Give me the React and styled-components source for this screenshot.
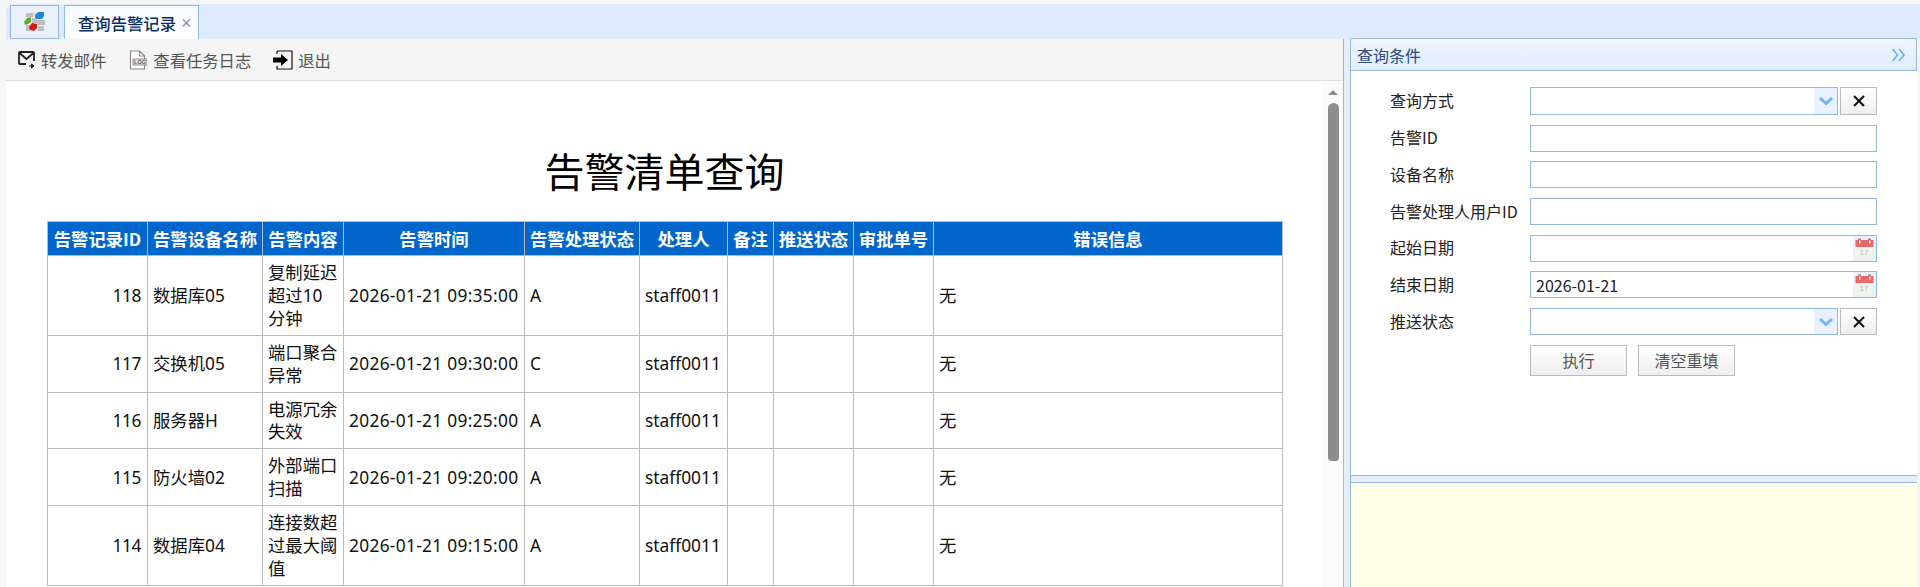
import React from "react";
import styled, { createGlobalStyle } from "styled-components";

const GlobalStyle = createGlobalStyle`
  html, body {
    margin: 0;
    padding: 0;
    background: #f6f6f6;
  }
  body {
    font-family: "Noto Sans CJK SC", "Liberation Sans", sans-serif;
  }
`;

const Frame = styled.div`
  width: 1920px;
  height: 587px;
  overflow: hidden;
  box-sizing: border-box;
  padding: 4px 0 0 6px;
  display: flex;
  flex-direction: column;
  background: #f6f6f6;
`;

const TabBar = styled.div`
  height: 35px;
  flex: none;
  box-sizing: border-box;
  padding: 1px 0 0 4px;
  display: flex;
  gap: 5px;
  background: #deeaff;
  border-top-left-radius: 8px;
`;

const Tab = styled.div`
  box-sizing: border-box;
  height: 34px;
  border: 1px solid #95b8e7;
  border-bottom: ${(p) => (p.$active ? "none" : "1px solid #95b8e7")};
  background: ${(p) => (p.$active ? "linear-gradient(#f6f9ff, #fff)" : "#e9f1ff")};
  display: flex;
  align-items: center;
  justify-content: ${(p) => (p.$active ? "flex-start" : "center")};
  width: ${(p) => (p.$active ? "135px" : "49px")};
  padding-left: ${(p) => (p.$active ? "13px" : "0")};
`;

const TabTitle = styled.span`
  font-size: 16.33px;
  font-weight: 500;
  color: #0e2d5f;
  white-space: nowrap;
`;

const TabClose = styled.span`
  margin-left: 5px;
  font-size: 18px;
  line-height: 18px;
  color: #7f93b5;
  font-family: "Liberation Sans", sans-serif;
`;

const Workspace = styled.div`
  flex: 1;
  min-height: 0;
  display: flex;
`;

const MainColumn = styled.div`
  width: 1337px;
  flex: none;
  display: flex;
  flex-direction: column;
  background: #fff;
`;

const Toolbar = styled.div`
  height: 42px;
  flex: none;
  box-sizing: border-box;
  padding-left: 12px;
  display: flex;
  align-items: center;
  gap: 22px;
  background: #f5f5f5;
  border-bottom: 1px solid #dedede;
`;

const ToolItem = styled.div`
  display: flex;
  align-items: center;
  gap: ${(p) => p.$gap || 6}px;
  font-size: 16.33px;
  color: #555;
`;

const ContentRow = styled.div`
  flex: 1;
  min-height: 0;
  display: flex;
`;

const ReportPane = styled.div`
  width: 1317px;
  flex: none;
  box-sizing: border-box;
  padding: 65px 0 0 41px;
  overflow: hidden;
`;

const ReportBody = styled.div`
  width: 1235px;
`;

const ReportTitle = styled.h1`
  margin: 0 0 27px;
  height: 48px;
  font-size: 40px;
  line-height: 48px;
  font-weight: 400;
  text-align: center;
  color: #000;
`;

const AlarmTable = styled.table`
  width: 1235px;
  table-layout: fixed;
  border-collapse: collapse;
  font-family: "Noto Sans", "Noto Sans CJK SC", sans-serif;
  font-size: 17.33px;
  color: #111;
`;

const HeadCell = styled.th`
  height: 33px;
  padding: 0;
  border: 1px solid #bbb;
  background: #0066cc;
  color: #fff;
  font-family: "Noto Sans CJK SC", sans-serif;
  font-size: 17.33px;
  font-weight: 700;
  text-align: center;
  white-space: nowrap;
`;

const Cell = styled.td`
  padding: 5px ${(p) => (p.$wrap ? 4 : 6)}px 5px 5px;
  border: 1px solid #bbb;
  line-height: 22.9px;
  text-align: ${(p) => (p.$right ? "right" : "left")};
  white-space: ${(p) => (p.$wrap ? "normal" : "nowrap")};
  letter-spacing: ${(p) => p.$spacing || "normal"};
`;

const ScrollTrack = styled.div`
  width: 20px;
  flex: none;
  box-sizing: border-box;
  padding-top: 9px;
  display: flex;
  flex-direction: column;
  align-items: center;
  background: #fbfbfb;
`;

const ScrollArrow = styled.div`
  width: 0;
  height: 0;
  border-left: 5px solid transparent;
  border-right: 5px solid transparent;
  border-bottom: 5px solid #8d8d8d;
`;

const ScrollThumb = styled.div`
  width: 11px;
  height: 358px;
  margin-top: 8px;
  background: #8d8d8d;
  border-radius: 6px 6px 4px 4px;
`;

const VSplitter = styled.div`
  width: 8px;
  flex: none;
  box-sizing: border-box;
  background: #e6eef8;
  border-left: 1px solid #95b8e7;
  border-right: 1px solid #95b8e7;
`;

const SidePanel = styled.div`
  width: 566px;
  flex: none;
  display: flex;
  flex-direction: column;
  background: #fff;
`;

const SideHeader = styled.div`
  height: 33px;
  flex: none;
  margin-top: -1px;
  box-sizing: border-box;
  padding: 0 10px 0 6px;
  display: flex;
  align-items: center;
  justify-content: space-between;
  background: linear-gradient(#eff5ff, #e0ecff);
  border: 1px solid #95b8e7;
  border-left: none;
  font-size: 16px;
  color: #2b4a7d;
`;

const QueryForm = styled.form`
  height: 404px;
  flex: none;
  box-sizing: border-box;
  margin: 0;
  padding: 16px 0 0 39px;
  display: grid;
  grid-template-columns: 140px 347px;
  grid-auto-rows: min-content;
  row-gap: 9.7px;
  font-size: 16px;
  color: #222;
`;

const FieldLabel = styled.label`
  display: flex;
  align-items: center;
  padding-bottom: 2px;
  white-space: nowrap;
`;

const ComboRow = styled.div`
  display: flex;
  gap: 2px;
`;

const FieldBox = styled.div`
  flex: 1;
  height: ${(p) => p.$height || 27}px;
  box-sizing: border-box;
  display: flex;
  border: 1px solid #95b8e7;
  background: #fff;
`;

const FieldInput = styled.input`
  flex: 1;
  min-width: 0;
  padding: 0 5px;
  border: none;
  outline: none;
  background: transparent;
  font-family: "Noto Sans CJK SC", sans-serif;
  font-size: 16px;
  color: #222;
`;

const FieldAddon = styled.span`
  width: 23px;
  flex: none;
  display: flex;
  align-items: center;
  justify-content: center;
  background: #e8f1ff;
`;

const ClearButton = styled.button`
  width: 37px;
  height: ${(p) => p.$height || 27}px;
  flex: none;
  padding: 0;
  display: flex;
  align-items: center;
  justify-content: center;
  border: 1px solid #bbb;
  background: linear-gradient(#fff, #eee);
`;

const ActionRow = styled.div`
  grid-column: 2;
  display: flex;
  gap: 11px;
`;

const ActionButton = styled.button`
  width: 97px;
  height: 31px;
  padding: 0;
  border: 1px solid #bbb;
  background: linear-gradient(#fff, #eee);
  font-family: "Noto Sans CJK SC", sans-serif;
  font-size: 16px;
  color: #555;
`;

const HSplitter = styled.div`
  height: 8px;
  flex: none;
  box-sizing: border-box;
  background: #e6eef8;
  border-top: 1px solid #95b8e7;
  border-bottom: 1px solid #95b8e7;
`;

const NotePane = styled.div`
  flex: 1;
  background: #fefee6;
`;

const AppLogo = () => (
  <svg width="22" height="20" viewBox="0 0 22 20">
    <path d="M2 1h7v4H2zM13 8h8v5h-8zM2 13h4v6H2zM14 14h6v5h-6zM8 6h5v5H8z" fill="#bdbdbd" />
    <path d="M9 0h2v5H9zM7 12h2v3H7zM13 13h1v3h-1z" fill="#e2e2e2" />
    <path d="M11 3l3-3h6v4l-2 3h-5l-2-1z" fill="#1e88d8" />
    <path d="M0 10l3-4 4-1v5l-3 2-3 1z" fill="#6aa52d" />
    <path d="M5 15l3-4 5 1v4l-3 3-4-1z" fill="#d81818" />
  </svg>
);

const MailIcon = () => (
  <svg width="17" height="19" viewBox="0 0 17 19">
    <path d="M8 14H2a1 1 0 0 1-1-1V3a1 1 0 0 1 1-1h13a1 1 0 0 1 1 1v8" fill="none" stroke="#222" strokeWidth="1.8" />
    <path d="M1.5 3l7 6 7-6" fill="none" stroke="#222" strokeWidth="1.8" />
    <path d="M11 16h4M13.5 14l2.5 2-2.5 2z" fill="#222" stroke="#222" strokeWidth="1" />
  </svg>
);

const LogIcon = () => (
  <svg width="19" height="20" viewBox="0 0 19 20">
    <path d="M2.5 16V1h9l5 5v13h-14z" fill="#fff" stroke="#8a8a8a" strokeWidth="1.2" />
    <path d="M11.5 1v5h5" fill="none" stroke="#8a8a8a" strokeWidth="1.2" />
    <rect x="5" y="9" width="14" height="6" fill="#e8e8e8" stroke="#777" strokeWidth="0.8" />
    <text x="12" y="14" fontSize="5.5" fontWeight="700" textAnchor="middle" fontFamily="Liberation Sans" fill="#555">
      LOG
    </text>
  </svg>
);

const ExitIcon = () => (
  <svg width="20" height="20" viewBox="0 0 20 20">
    <path d="M4 1h15v18H4v-3" fill="none" stroke="#111" strokeWidth="1.2" />
    <path d="M4 1v3" stroke="#111" strokeWidth="1.2" />
    <path d="M0 7.5h8V4l7 6-7 6v-3.5H0z" fill="#000" />
  </svg>
);

const ExpandIcon = () => (
  <svg width="15" height="14" viewBox="0 0 15 14">
    <path d="M1.5 1l5 6-5 6M8 1l5 6-5 6" fill="none" stroke="#6fb4f5" strokeWidth="1.7" />
  </svg>
);

const ChevronDown = () => (
  <svg width="14" height="8" viewBox="0 0 14 8">
    <path d="M1 1l6 5.5L13 1" fill="none" stroke="#6fb4f5" strokeWidth="3" />
  </svg>
);

const CrossIcon = () => (
  <svg width="12" height="12" viewBox="0 0 12 12">
    <path d="M1 1l10 10M11 1L1 11" stroke="#111" strokeWidth="2" />
  </svg>
);

const CalendarIcon = () => (
  <svg width="19" height="21" viewBox="0 0 19 21">
    <rect x="0.5" y="2" width="18" height="19" fill="#f3f3ee" />
    <rect x="0.5" y="2" width="18" height="7" fill="#e8686c" />
    <rect x="3" y="0.5" width="3" height="5" fill="#e8686c" />
    <rect x="13" y="0.5" width="3" height="5" fill="#e8686c" />
    <rect x="4" y="2.5" width="1.5" height="3" fill="#fff" />
    <rect x="14" y="2.5" width="1.5" height="3" fill="#fff" />
    <text x="9" y="17" fontSize="8" textAnchor="middle" fontFamily="Liberation Sans" fill="#bbb">
      17
    </text>
  </svg>
);

const columns = [
  { title: "告警记录ID", width: 100 },
  { title: "告警设备名称", width: 115 },
  { title: "告警内容", width: 81 },
  { title: "告警时间", width: 181 },
  { title: "告警处理状态", width: 115 },
  { title: "处理人", width: 88 },
  { title: "备注", width: 46 },
  { title: "推送状态", width: 80 },
  { title: "审批单号", width: 80 },
  { title: "错误信息", width: 349 },
];

const alarms = [
  { id: 118, device: "数据库05", content: "复制延迟超过10分钟", time: "2026-01-21 09:35:00", state: "A" },
  { id: 117, device: "交换机05", content: "端口聚合异常", time: "2026-01-21 09:30:00", state: "C" },
  { id: 116, device: "服务器H", content: "电源冗余失效", time: "2026-01-21 09:25:00", state: "A" },
  { id: 115, device: "防火墙02", content: "外部端口扫描", time: "2026-01-21 09:20:00", state: "A" },
  { id: 114, device: "数据库04", content: "连接数超过最大阈值", time: "2026-01-21 09:15:00", state: "A" },
];

const textFields = [
  { label: "告警ID" },
  { label: "设备名称" },
  { label: "告警处理人用户ID" },
];

function ComboField({ label, height }) {
  return (
    <>
      <FieldLabel>{label}</FieldLabel>
      <ComboRow>
        <FieldBox $height={height}>
          <FieldInput readOnly value="" />
          <FieldAddon>
            <ChevronDown />
          </FieldAddon>
        </FieldBox>
        <ClearButton type="button" $height={height}>
          <CrossIcon />
        </ClearButton>
      </ComboRow>
    </>
  );
}

function DateField({ label, value }) {
  return (
    <>
      <FieldLabel>{label}</FieldLabel>
      <FieldBox>
        <FieldInput readOnly value={value} />
        <FieldAddon>
          <CalendarIcon />
        </FieldAddon>
      </FieldBox>
    </>
  );
}

function App() {
  return (
    <>
      <GlobalStyle />
      <Frame>
        <TabBar>
          <Tab>
            <AppLogo />
          </Tab>
          <Tab $active>
            <TabTitle>查询告警记录</TabTitle>
            <TabClose>×</TabClose>
          </Tab>
        </TabBar>
        <Workspace>
          <MainColumn>
            <Toolbar>
              <ToolItem>
                <MailIcon />
                转发邮件
              </ToolItem>
              <ToolItem>
                <LogIcon />
                查看任务日志
              </ToolItem>
              <ToolItem $gap={5}>
                <ExitIcon />
                退出
              </ToolItem>
            </Toolbar>
            <ContentRow>
              <ReportPane>
                <ReportBody>
                  <ReportTitle>告警清单查询</ReportTitle>
                  <AlarmTable>
                    <colgroup>
                      {columns.map((col) => (
                        <col key={col.title} width={col.width} />
                      ))}
                    </colgroup>
                    <thead>
                      <tr>
                        {columns.map((col) => (
                          <HeadCell key={col.title}>{col.title}</HeadCell>
                        ))}
                      </tr>
                    </thead>
                    <tbody>
                      {alarms.map((row) => (
                        <tr key={row.id}>
                          <Cell $right $spacing="-0.4px">{row.id}</Cell>
                          <Cell>{row.device}</Cell>
                          <Cell $wrap>{row.content}</Cell>
                          <Cell $spacing="0.3px">{row.time}</Cell>
                          <Cell>{row.state}</Cell>
                          <Cell>staff0011</Cell>
                          <Cell />
                          <Cell />
                          <Cell />
                          <Cell>无</Cell>
                        </tr>
                      ))}
                    </tbody>
                  </AlarmTable>
                </ReportBody>
              </ReportPane>
              <ScrollTrack>
                <ScrollArrow />
                <ScrollThumb />
              </ScrollTrack>
            </ContentRow>
          </MainColumn>
          <VSplitter />
          <SidePanel>
            <SideHeader>
              查询条件
              <ExpandIcon />
            </SideHeader>
            <QueryForm>
              <ComboField label="查询方式" height={28} />
              {textFields.map((field) => (
                <React.Fragment key={field.label}>
                  <FieldLabel>{field.label}</FieldLabel>
                  <FieldBox>
                    <FieldInput readOnly value="" />
                  </FieldBox>
                </React.Fragment>
              ))}
              <DateField label="起始日期" value="" />
              <DateField label="结束日期" value="2026-01-21" />
              <ComboField label="推送状态" />
              <ActionRow>
                <ActionButton type="button">执行</ActionButton>
                <ActionButton type="button">清空重填</ActionButton>
              </ActionRow>
            </QueryForm>
            <HSplitter />
            <NotePane />
          </SidePanel>
        </Workspace>
      </Frame>
    </>
  );
}

export default App;
